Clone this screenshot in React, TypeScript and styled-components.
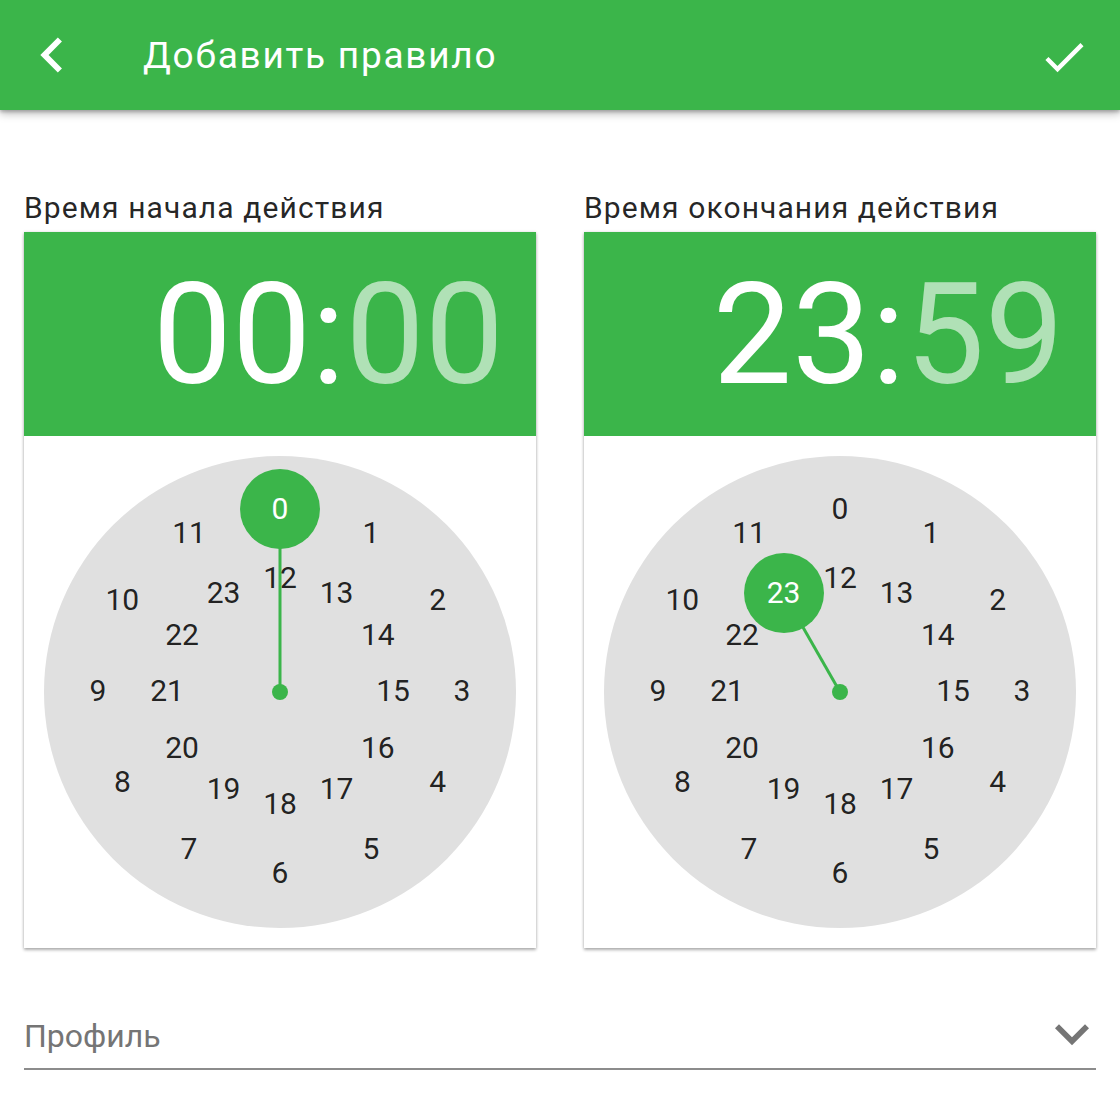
import React from 'react';
import styled, { createGlobalStyle } from 'styled-components';
import { MdChevronLeft, MdCheck, MdExpandMore } from 'react-icons/md';

const GREEN = '#3bb54a';

const GlobalStyle = createGlobalStyle`
  html, body {
    margin: 0;
    padding: 0;
    background: #ffffff;
    font-family: Roboto, "Noto Sans", sans-serif;
  }
`;

const FACE = 472;
const CENTER = FACE / 2;
const OUTER_R = 182;
const INNER_R = 113;

const hourPosition = (hour: number) => {
  const r = hour < 12 ? OUTER_R : INNER_R;
  const angle = ((hour % 12) * 30 * Math.PI) / 180;
  return {
    x: CENTER + r * Math.sin(angle),
    y: CENTER - 1 - r * Math.cos(angle),
  };
};

interface TimeCardProps {
  label: string;
  hours: string;
  minutes: string;
  selectedHour: number;
}

const ClockFace: React.FC<{ selectedHour: number }> = ({ selectedHour }) => {
  const sel = hourPosition(selectedHour);
  return (
    <Face>
      <HandLayer width={FACE} height={FACE}>
        <line x1={CENTER} y1={CENTER} x2={sel.x} y2={sel.y} stroke={GREEN} strokeWidth={3} />
        <circle cx={CENTER} cy={CENTER} r={8} fill={GREEN} />
      </HandLayer>
      {Array.from({ length: 24 }, (_, h) => {
        const p = hourPosition(h);
        return (
          <HourLabel key={h} $selected={h === selectedHour} style={{ left: p.x, top: p.y }}>
            {h}
          </HourLabel>
        );
      })}
    </Face>
  );
};

const TimeCard: React.FC<TimeCardProps> = ({ label, hours, minutes, selectedHour }) => (
  <Column>
    <ColumnLabel>{label}</ColumnLabel>
    <Card>
      <TimeDisplay>
        {hours}:<Minutes>{minutes}</Minutes>
      </TimeDisplay>
      <ClockArea>
        <ClockFace selectedHour={selectedHour} />
      </ClockArea>
    </Card>
  </Column>
);

export default function App() {
  return (
    <>
      <GlobalStyle />
      <Page>
        <Header>
          <BackButton>
            <MdChevronLeft size={70} />
          </BackButton>
          <Title>Добавить правило</Title>
          <ConfirmButton>
            <MdCheck size={52} />
          </ConfirmButton>
        </Header>

        <Content>
          <Columns>
            <TimeCard label="Время начала действия" hours="00" minutes="00" selectedHour={0} />
            <TimeCard label="Время окончания действия" hours="23" minutes="59" selectedHour={23} />
          </Columns>

          <Select>
            <SelectText>Профиль</SelectText>
            <SelectIcon>
              <MdExpandMore size={68} />
            </SelectIcon>
          </Select>
        </Content>
      </Page>
    </>
  );
}

// Styled Components
const Page = styled.div`
  width: 1120px;
  min-height: 1100px;
  background: #ffffff;
`;

const Header = styled.header`
  display: flex;
  align-items: center;
  height: 110px;
  background: ${GREEN};
  color: #ffffff;
  box-shadow: 0 4px 8px rgba(0, 0, 0, 0.25), 0 2px 3px rgba(0, 0, 0, 0.2);
  position: relative;
  z-index: 1;
`;

const BackButton = styled.div`
  display: flex;
  margin-left: 17px;
`;

const Title = styled.h1`
  flex: 1;
  margin: 0 0 0 56px;
  font-size: 37px;
  font-weight: 400;
  letter-spacing: 1.75px;
`;

const ConfirmButton = styled.div`
  display: flex;
  margin: 4px 30px 0 0;
`;

const Content = styled.main`
  padding: 81px 24px 0;
`;

const Columns = styled.div`
  display: grid;
  grid-template-columns: 512px 512px;
  gap: 48px;
`;

const Column = styled.section`
  display: flex;
  flex-direction: column;
`;

const ColumnLabel = styled.div`
  font-size: 30px;
  line-height: 34px;
  letter-spacing: 1.1px;
  color: rgba(0, 0, 0, 0.87);
  margin-bottom: 7px;
`;

const Card = styled.div`
  background: #ffffff;
  box-shadow: 0 2px 3px rgba(0, 0, 0, 0.3), 0 0 3px rgba(0, 0, 0, 0.12);
`;

const TimeDisplay = styled.div`
  height: 204px;
  background: ${GREEN};
  color: #ffffff;
  font-size: 141px;
  line-height: 206px;
  text-align: right;
  padding-right: 32px;
  white-space: nowrap;
`;

const Minutes = styled.span`
  color: rgba(255, 255, 255, 0.6);
`;

const ClockArea = styled.div`
  padding: 20px;
`;

const Face = styled.div`
  position: relative;
  width: ${FACE}px;
  height: ${FACE}px;
  border-radius: 50%;
  background: #e0e0e0;
`;

const HandLayer = styled.svg`
  position: absolute;
  left: 0;
  top: 0;
`;

const HourLabel = styled.div<{ $selected: boolean }>`
  position: absolute;
  display: flex;
  align-items: center;
  justify-content: center;
  width: ${({ $selected }) => ($selected ? 80 : 60)}px;
  height: ${({ $selected }) => ($selected ? 80 : 40)}px;
  transform: translate(-50%, -50%);
  border-radius: 50%;
  background: ${({ $selected }) => ($selected ? GREEN : 'transparent')};
  color: ${({ $selected }) => ($selected ? '#ffffff' : 'rgba(0, 0, 0, 0.87)')};
  font-size: 30px;
  line-height: 1;
`;

const Select = styled.div`
  display: flex;
  align-items: center;
  height: 68px;
  margin-top: 52px;
  border-bottom: 2px solid #8c8c8c;
`;

const SelectText = styled.div`
  flex: 1;
  font-size: 32px;
  padding-top: 3px;
  color: #757575;
`;

const SelectIcon = styled.div`
  display: flex;
  margin-right: -10px;
  color: #757575;
`;
